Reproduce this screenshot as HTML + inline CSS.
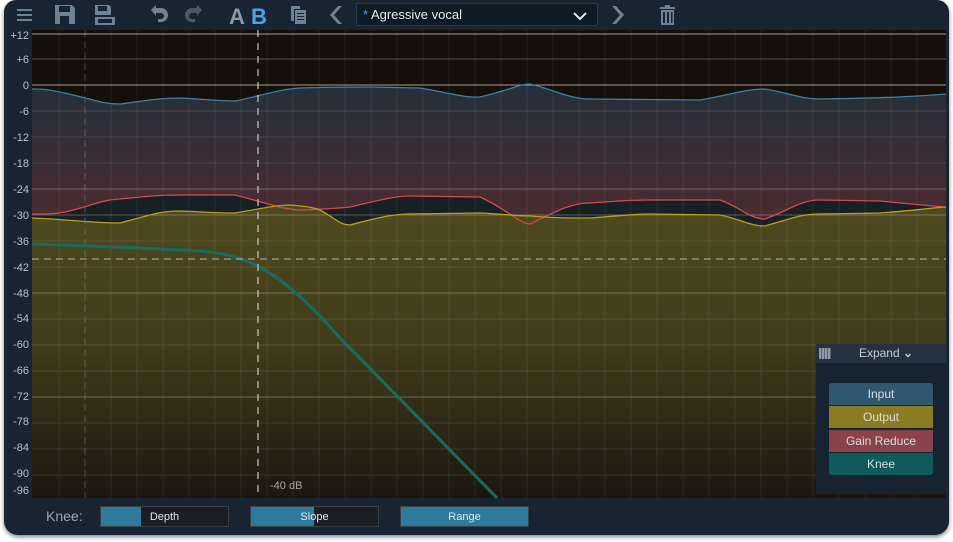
<!DOCTYPE html>
<html><head><meta charset="utf-8"><style>
html,body{margin:0;padding:0;background:#fff;width:953px;height:542px;overflow:hidden;font-family:"Liberation Sans",sans-serif;}
.win{position:absolute;left:4px;top:0;width:945px;height:535px;background:#182431;border-radius:12px 12px 14px 14px;box-shadow:0 2px 4px rgba(0,0,0,.5);overflow:hidden;}
.lbl{position:absolute;left:0;width:25px;text-align:right;font-size:11px;color:#b9c0c8;}
.sl{position:absolute;top:506px;height:21px;width:129px;background:#1b1e22;border:1px solid #3a4048;box-sizing:border-box;font-size:11px;color:#e4e8ec;text-align:center;line-height:20px;}
.sl .f{position:absolute;left:0;top:0;bottom:0;background:#2e7a9c;}
.sl span{position:relative;}
.lg{position:absolute;left:829px;width:104px;height:22px;font-size:12px;color:#d8dde2;text-align:center;line-height:22px;}
</style></head><body>
<div class="win">
<svg width="945" height="535" style="position:absolute;left:0;top:0" xmlns="http://www.w3.org/2000/svg">
<defs>
<linearGradient id="gi" x1="0" y1="85" x2="0" y2="230" gradientUnits="userSpaceOnUse"><stop offset="0" stop-color="#24303a"/><stop offset="1" stop-color="#4f2a30"/></linearGradient>
<linearGradient id="gy" x1="0" y1="200" x2="0" y2="498" gradientUnits="userSpaceOnUse"><stop offset="0" stop-color="#4f4a1f"/><stop offset="0.5" stop-color="#403b1a"/><stop offset="1" stop-color="#1b1710"/></linearGradient>
</defs>
<g transform="translate(-4,0)">
<rect x="32" y="30" width="914" height="468" fill="#150f0a"/>
<path d="M32,89 C45,89 50,90 60,92 C90,98 100,104 120,104 C150,100 160,98 180,98 C205,99 215,101 235,101 C260,96 280,89 300,88 C330,87 350,87 370,87 L420,88 C450,93 465,98 480,97 C510,90 520,84 530,84 C555,90 570,99 590,99 L700,100 C730,95 745,89 765,89 C790,93 800,99 820,99 C880,98 910,97 946,94 L946,498 L32,498Z" fill="url(#gi)"/>
<path d="M32,214 C50,214 55,214 65,212 C95,205 100,200 120,199 C150,196 160,195 180,195 L235,195 C260,201 280,209 300,210 C330,209 340,208 350,207 C380,200 395,196 410,196 L480,197 C505,208 520,224 530,224 C555,212 570,203 590,203 C620,201 630,200 650,200 L720,200 C740,207 750,219 765,219 C790,210 800,200 820,200 L880,201 C910,204 930,206 946,207 L946,498 L32,498Z" fill="#172024"/>
<path d="M32,218 C50,219 55,219 65,220 C95,222 100,223 120,223 C150,215 160,211 180,211 C205,212 215,213 235,213 C260,209 275,205 290,205 C305,206 315,208 320,210 C335,218 340,225 350,225 C380,217 395,214 410,214 L480,213 C505,214 515,216 530,216 C555,218 570,218 590,218 C620,216 630,214 650,214 L720,215 C740,219 750,226 765,226 C790,219 800,214 820,214 L880,213 C910,211 930,208 946,207 L946,498 L32,498Z" fill="url(#gy)"/>
<g stroke="#ffffff" stroke-opacity="0.07" stroke-width="1">
<line x1="59" y1="30" x2="59" y2="498"/><line x1="111" y1="30" x2="111" y2="498"/><line x1="137" y1="30" x2="137" y2="498"/><line x1="163" y1="30" x2="163" y2="498"/><line x1="189" y1="30" x2="189" y2="498"/><line x1="215" y1="30" x2="215" y2="498"/><line x1="241" y1="30" x2="241" y2="498"/><line x1="267" y1="30" x2="267" y2="498"/><line x1="293" y1="30" x2="293" y2="498"/><line x1="319" y1="30" x2="319" y2="498"/><line x1="345" y1="30" x2="345" y2="498"/><line x1="371" y1="30" x2="371" y2="498"/><line x1="397" y1="30" x2="397" y2="498"/><line x1="423" y1="30" x2="423" y2="498"/><line x1="449" y1="30" x2="449" y2="498"/><line x1="475" y1="30" x2="475" y2="498"/><line x1="501" y1="30" x2="501" y2="498"/><line x1="527" y1="30" x2="527" y2="498"/><line x1="553" y1="30" x2="553" y2="498"/><line x1="579" y1="30" x2="579" y2="498"/><line x1="605" y1="30" x2="605" y2="498"/><line x1="631" y1="30" x2="631" y2="498"/><line x1="657" y1="30" x2="657" y2="498"/><line x1="683" y1="30" x2="683" y2="498"/><line x1="709" y1="30" x2="709" y2="498"/><line x1="735" y1="30" x2="735" y2="498"/><line x1="761" y1="30" x2="761" y2="498"/><line x1="787" y1="30" x2="787" y2="498"/><line x1="813" y1="30" x2="813" y2="498"/><line x1="839" y1="30" x2="839" y2="498"/><line x1="865" y1="30" x2="865" y2="498"/><line x1="891" y1="30" x2="891" y2="498"/><line x1="917" y1="30" x2="917" y2="498"/>
</g>
<g stroke="#ffffff" stroke-opacity="0.1">
<line x1="32" y1="111" x2="946" y2="111"/><line x1="32" y1="137" x2="946" y2="137"/><line x1="32" y1="163" x2="946" y2="163"/><line x1="32" y1="241" x2="946" y2="241"/><line x1="32" y1="267" x2="946" y2="267"/><line x1="32" y1="319" x2="946" y2="319"/><line x1="32" y1="345" x2="946" y2="345"/><line x1="32" y1="371" x2="946" y2="371"/><line x1="32" y1="423" x2="946" y2="423"/><line x1="32" y1="449" x2="946" y2="449"/><line x1="32" y1="475" x2="946" y2="475"/>
</g>
<g stroke="#d8d0c0" stroke-opacity="0.35"><line x1="32" y1="59" x2="946" y2="59"/><line x1="32" y1="189" x2="946" y2="189"/><line x1="32" y1="215" x2="946" y2="215"/><line x1="32" y1="293" x2="946" y2="293"/><line x1="32" y1="397" x2="946" y2="397"/></g>
<g stroke="#e0d8cc" stroke-opacity="0.7"><line x1="32" y1="34" x2="946" y2="34"/><line x1="32" y1="85" x2="946" y2="85"/></g>
<line x1="85" y1="30" x2="85" y2="498" stroke="#aaa" stroke-opacity="0.35" stroke-dasharray="7,4"/>
<path d="M32,89 C45,89 50,90 60,92 C90,98 100,104 120,104 C150,100 160,98 180,98 C205,99 215,101 235,101 C260,96 280,89 300,88 C330,87 350,87 370,87 L420,88 C450,93 465,98 480,97 C510,90 520,84 530,84 C555,90 570,99 590,99 L700,100 C730,95 745,89 765,89 C790,93 800,99 820,99 C880,98 910,97 946,94" fill="none" stroke="#3f7ea3" stroke-width="1.3"/>
<path d="M32,214 C50,214 55,214 65,212 C95,205 100,200 120,199 C150,196 160,195 180,195 L235,195 C260,201 280,209 300,210 C330,209 340,208 350,207 C380,200 395,196 410,196 L480,197 C505,208 520,224 530,224 C555,212 570,203 590,203 C620,201 630,200 650,200 L720,200 C740,207 750,219 765,219 C790,210 800,200 820,200 L880,201 C910,204 930,206 946,207" fill="none" stroke="#d24b4f" stroke-width="1.3"/>
<path d="M32,218 C50,219 55,219 65,220 C95,222 100,223 120,223 C150,215 160,211 180,211 C205,212 215,213 235,213 C260,209 275,205 290,205 C305,206 315,208 320,210 C335,218 340,225 350,225 C380,217 395,214 410,214 L480,213 C505,214 515,216 530,216 C555,218 570,218 590,218 C620,216 630,214 650,214 L720,215 C740,219 750,226 765,226 C790,219 800,214 820,214 L880,213 C910,211 930,208 946,207" fill="none" stroke="#b99f1c" stroke-width="1.3"/>
<path d="M32,244 C90,246 150,248 200,251 C235,254 255,262 280,280 C300,295 320,315 340,338 L497,498" fill="none" stroke="#176b60" stroke-width="3"/>
<line x1="32" y1="259" x2="946" y2="259" stroke="#cfc6b6" stroke-opacity="0.7" stroke-width="1.3" stroke-dasharray="7,5"/>
<line x1="258" y1="30" x2="258" y2="498" stroke="#ddd" stroke-opacity="0.8" stroke-width="1.3" stroke-dasharray="7,6"/>
<text x="270" y="489" font-size="11" fill="#a8a49c" font-family="Liberation Sans">-40 dB</text>
</g>
<g fill="#6f8294" transform="translate(-4,0)">
<rect x="17" y="9" width="15" height="2"/><rect x="17" y="14" width="15" height="2"/><rect x="17" y="19" width="15" height="2"/>
<path d="M55,5 h17 l3,3 v16 h-20z M59,6 v6 h11 v-6z M60,16 v8 h9 v-8z" fill-rule="evenodd"/>
<path d="M95,5 h14 l2,2 v8 h-16z M98,6 v5 h9 v-5z M95,17 h20 v8 h-20z M98,19 v4 h14 v-4z" fill-rule="evenodd"/>
<path d="M153,8 l5,-5 v3 h5 a6,6 0 0 1 0,14 h-3 v-3 h3 a3,3 0 0 0 0,-6 h-5 v3z" transform="translate(-2,2)"/>
<path d="M202,8 l-5,-5 v3 h-5 a6,6 0 0 0 0,14 h3 v-3 h-3 a3,3 0 0 1 0,-6 h5 v3z" transform="translate(0,2)" fill="#4b5a68"/>
<text x="229" y="24" font-size="22" font-weight="bold" fill="#8799aa" font-family="Liberation Sans">A</text>
<text x="251" y="24" font-size="22" font-weight="bold" fill="#4ba3e8" font-family="Liberation Sans">B</text>
<path d="M291,6 h9 v3 h-6 v12 h-3z M295,10 h11 v14 h-11z M297,13 h7 v1 h-7z M297,16 h7 v1 h-7z M297,19 h7 v1 h-7z" fill-rule="evenodd"/>
<path d="M342,6 l-8,9 l8,9 h-4 l-8,-9 l8,-9z"/>
<path d="M612,6 l8,9 l-8,9 h4 l8,-9 l-8,-9z"/>
<path d="M660,7 h15 v2 h-15z M665,5 h5 v2 h-5z M661,10 h13 v15 h-13z M663,12 v11 h2 v-11z M667,12 v11 h2 v-11z M671,12 v11 h1.5 v-11z" fill-rule="evenodd"/>
</g>
</svg>
<div style="position:absolute;left:352px;top:3px;width:242px;height:23px;background:#0e1a24;border:1px solid #2d3b48;border-radius:2px;box-sizing:border-box;font-size:13px;color:#e6eaee;line-height:21px;padding-left:6px;"><span style="color:#4ba3e8">*</span> Agressive vocal
<svg width="14" height="10" style="position:absolute;right:10px;top:7px"><path d="M1,2 L7,8 L13,2" fill="none" stroke="#e6eaee" stroke-width="2"/></svg></div>
<div class="lbl" style="top:30px">+12</div><div class="lbl" style="top:54px">+6</div><div class="lbl" style="top:80px">0</div><div class="lbl" style="top:106px">-6</div><div class="lbl" style="top:132px">-12</div><div class="lbl" style="top:158px">-18</div><div class="lbl" style="top:184px">-24</div><div class="lbl" style="top:210px">-30</div><div class="lbl" style="top:236px">-36</div><div class="lbl" style="top:262px">-42</div><div class="lbl" style="top:288px">-48</div><div class="lbl" style="top:313px">-54</div><div class="lbl" style="top:339px">-60</div><div class="lbl" style="top:365px">-66</div><div class="lbl" style="top:391px">-72</div><div class="lbl" style="top:416px">-78</div><div class="lbl" style="top:442px">-84</div><div class="lbl" style="top:468px">-90</div><div class="lbl" style="top:485px">-96</div>
<div style="position:absolute;left:812px;top:344px;width:130px;height:150px;background:#172331;"></div>
<div style="position:absolute;left:812px;top:344px;width:130px;height:19px;background:#243342;font-size:12px;color:#c2cbd4;line-height:19px;text-align:center;">&nbsp;&nbsp;&nbsp;Expand <b>&#8964;</b></div>
<div style="position:absolute;left:815px;top:348px;width:12px;height:11px;background:#8d99a4;border-radius:1px;background-image:repeating-linear-gradient(90deg,#8d99a4 0 2px,#5a6570 2px 3px)"></div>
<div class="lg" style="left:825px;top:383px;background:#2f5870;border-radius:3px 3px 0 0">Input</div>
<div class="lg" style="left:825px;top:406px;background:#8b7b22">Output</div>
<div class="lg" style="left:825px;top:430px;background:#8a424b">Gain Reduce</div>
<div class="lg" style="left:825px;top:453px;background:#0f5a5a;border-radius:0 0 3px 3px">Knee</div>
<div style="position:absolute;left:42px;top:508px;font-size:14px;color:#9aa6b2">Knee:</div>
<div class="sl" style="left:96px"><div class="f" style="width:40px"></div><span>Depth</span></div>
<div class="sl" style="left:246px"><div class="f" style="width:63px"></div><span>Slope</span></div>
<div class="sl" style="left:396px"><div class="f" style="width:127px"></div><span>Range</span></div>
</div>
</body></html>
